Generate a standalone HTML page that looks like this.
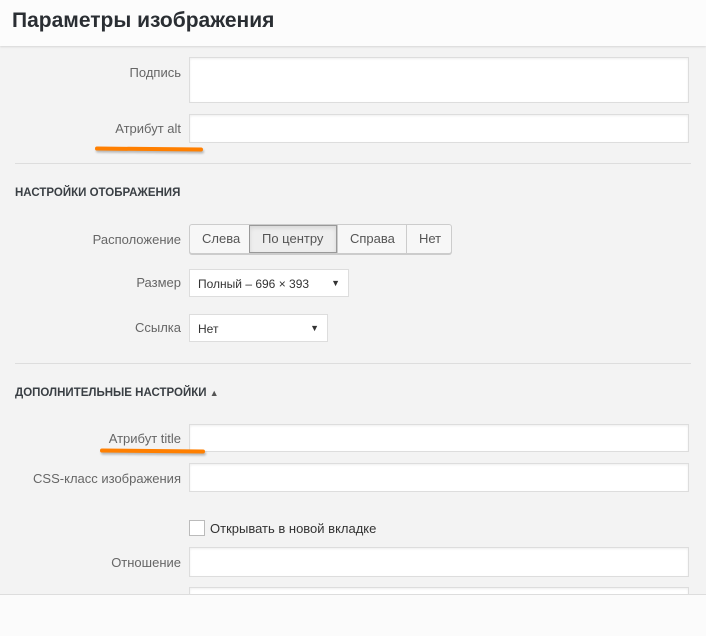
<!DOCTYPE html>
<html><head><meta charset="utf-8"><style>
*{box-sizing:border-box;margin:0;padding:0}
body{width:706px;height:636px;overflow:hidden;background:#f3f3f3;font-family:"Liberation Sans",sans-serif;position:relative;color:#444}
.a{position:absolute}
.hdr{left:0;top:0;width:706px;height:46px;background:#fcfcfc;box-shadow:0 1px 2px rgba(0,0,0,.12)}
.hdr h1{position:absolute;left:12px;top:9px;font-size:21px;font-weight:bold;color:#2a2e33}
.lbl{font-size:13px;color:#666;text-align:right;width:181px;left:0}
.inp{background:#fff;border:1px solid #ddd;box-shadow:inset 0 1px 2px rgba(0,0,0,.07);left:189px;width:500px}
.sep{left:15px;width:676px;height:1px;background:#ddd}
.h{left:15px;font-size:11.5px;font-weight:bold;color:#3a3f44}
.ul{background:#ff7f00;height:4px;border-radius:2px;box-shadow:1px 2px 2px rgba(0,0,0,.25)}
.bg{left:189px;top:224px;height:30px;display:flex;border:1px solid #ccc;border-radius:3px;background:#f7f7f7;box-shadow:0 1px 0 #ccc}
.bg div{font-size:13px;color:#555;padding:0 12px;line-height:28px;border-left:1px solid #ccc}
.bg div:first-child{border-left:0}
.bg .on{background:#eee;border:1px solid #999;box-shadow:inset 0 2px 4px rgba(0,0,0,.1);line-height:26px}
.sel{background:#fff;border:1px solid #ddd;font-size:12px;color:#333;padding:7px 8px;height:28px}
.sel span{position:absolute;right:8px;top:8px;font-size:9px}
</style></head><body>
<div class="a hdr"><h1>Параметры изображения</h1></div>
<div class="a lbl" style="top:65px">Подпись</div>
<div class="a inp" style="top:57px;height:46px"></div>
<div class="a lbl" style="top:121px">Атрибут alt</div>
<div class="a inp" style="top:114px;height:29px"></div>
<div class="a ul" style="left:95px;top:147px;width:108px;transform:rotate(0.5deg)"></div>
<div class="a sep" style="top:163px"></div>
<div class="a h" style="top:187px">НАСТРОЙКИ ОТОБРАЖЕНИЯ</div>
<div class="a lbl" style="top:232px">Расположение</div>
<div class="a bg"><div style="width:59px">Слева</div><div class="on" style="width:88px">По центру</div><div style="width:69px">Справа</div><div style="width:45px">Нет</div></div>
<div class="a lbl" style="top:275px">Размер</div>
<div class="a sel" style="left:189px;top:269px;width:160px">Полный – 696 × 393<span>▼</span></div>
<div class="a lbl" style="top:320px">Ссылка</div>
<div class="a sel" style="left:189px;top:314px;width:139px">Нет<span>▼</span></div>
<div class="a sep" style="top:363px"></div>
<div class="a h" style="top:387px">ДОПОЛНИТЕЛЬНЫЕ НАСТРОЙКИ <span style="font-size:9px;color:#555">▲</span></div>
<div class="a lbl" style="top:431px">Атрибут title</div>
<div class="a inp" style="top:424px;height:28px"></div>
<div class="a ul" style="left:100px;top:449px;width:105px;transform:rotate(0.5deg)"></div>
<div class="a lbl" style="top:471px">CSS-класс изображения</div>
<div class="a inp" style="top:463px;height:29px"></div>
<div class="a" style="left:189px;top:520px;width:16px;height:16px;background:#fff;border:1px solid #bbb"></div>
<div class="a" style="left:210px;top:521px;font-size:13px;color:#333">Открывать в новой вкладке</div>
<div class="a lbl" style="top:555px">Отношение</div>
<div class="a inp" style="top:547px;height:30px"></div>
<div class="a inp" style="top:587px;height:20px"></div>
<div class="a" style="left:0;top:594px;width:706px;height:42px;background:#fbfbfb;border-top:1px solid #ddd"></div>
</body></html>
